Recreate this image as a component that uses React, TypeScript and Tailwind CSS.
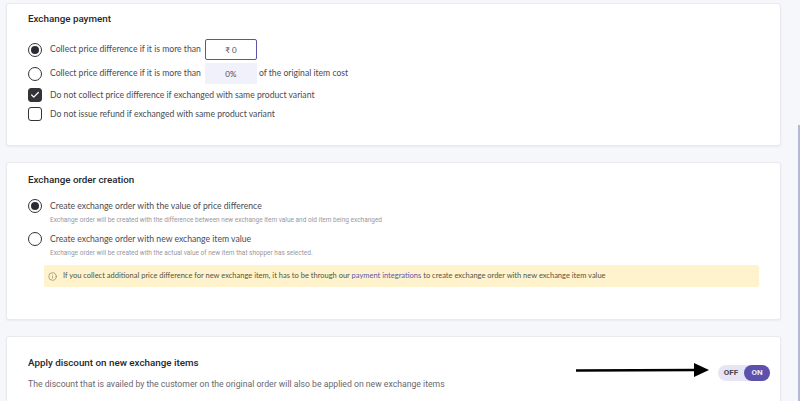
import { Check, Info } from "lucide-react";
import type { ReactNode } from "react";

function Radio({ checked = false }: { checked?: boolean }) {
	return (
		<span className="flex h-[14px] w-[14px] shrink-0 items-center justify-center rounded-full border-[1.5px] border-[#33333a] bg-white">
			{checked && <span className="h-[8px] w-[8px] rounded-full bg-[#2a2a30]" />}
		</span>
	);
}

function Box({ checked = false }: { checked?: boolean }) {
	return (
		<span
			className={`flex h-[14px] w-[14px] shrink-0 items-center justify-center rounded-[3px] border-[1.5px] border-[#33333a] ${
				checked ? "bg-[#33333a]" : "bg-white"
			}`}
		>
			{checked && <Check className="h-[10px] w-[10px] text-white" strokeWidth={3} />}
		</span>
	);
}

function Card({ className, children }: { className: string; children: ReactNode }) {
	return (
		<section className={`rounded-[3px] border border-[#e9e9ee] bg-white pl-[21px] shadow-[0_1px_2px_rgba(40,40,70,0.06)] ${className}`}>
			{children}
		</section>
	);
}

function Title({ children }: { children: ReactNode }) {
	return <h2 className="font-['Roboto',sans-serif] text-[9.8px] leading-[14px] font-medium text-[#26262b]">{children}</h2>;
}

export default function App() {
	return (
		<div className="relative h-[401px] w-[800px] overflow-hidden bg-[#f6f7fa] font-['Lato',sans-serif] text-[#4a4a50]">
			<div className="ml-[6px] flex w-[775px] flex-col gap-[16px] pt-[3px]">
				<Card className="h-[143px] pt-[8px]">
					<Title>Exchange payment</Title>
					<div className="mt-[13px] flex h-[21px] items-center text-[8.65px]">
						<Radio checked />
						<span className="ml-[8px]">Collect price difference if it is more than</span>
						<span className="ml-[4px] flex h-[21px] w-[52px] items-center justify-center rounded-[2px] border border-[#5b55a8] bg-white text-[8px]">
							₹ 0
						</span>
					</div>
					<div className="mt-[3px] flex h-[21px] items-center text-[8.65px]">
						<Radio />
						<span className="ml-[8px]">Collect price difference if it is more than</span>
						<span className="ml-[4px] flex h-[21px] w-[52px] items-center justify-center bg-[#f1f1fb] text-[8px]">0%</span>
						<span className="ml-[2px]">of the original item cost</span>
					</div>
					<div className="mt-[3px] flex h-[16px] items-center text-[8.65px]">
						<Box checked />
						<span className="ml-[8px]">Do not collect price difference if exchanged with same product variant</span>
					</div>
					<div className="mt-[3px] flex h-[16px] items-center text-[8.65px]">
						<Box />
						<span className="ml-[8px]">Do not issue refund if exchanged with same product variant</span>
					</div>
				</Card>

				<Card className="h-[158px] pt-[10px]">
					<Title>Exchange order creation</Title>
					<div className="mt-[12px] flex items-center text-[8.65px] leading-[14px]">
						<Radio checked />
						<span className="ml-[8px]">Create exchange order with the value of price difference</span>
					</div>
					<p className="mt-[1px] ml-[22px] font-['Roboto',sans-serif] text-[6.5px] leading-[12px] text-[#98989e]">
						Exchange order will be created with the difference between new exchange item value and old item being exchanged
					</p>
					<div className="mt-[6px] flex items-center text-[8.65px] leading-[14px]">
						<Radio />
						<span className="ml-[8px]">Create exchange order with new exchange item value</span>
					</div>
					<p className="mt-[1px] ml-[22px] font-['Roboto',sans-serif] text-[6.5px] leading-[12px] text-[#98989e]">
						Exchange order will be created with the actual value of new item that shopper has selected.
					</p>
					<div className="mt-[6px] ml-[16px] flex h-[22px] w-[715px] items-center rounded-[2px] bg-[#fff3cd] pl-[4px] text-[7.5px] text-[#55533f]">
						<Info className="h-[9px] w-[9px] text-[#6e6a50]" strokeWidth={1.5} />
						<span className="ml-[6px]">
							If you collect additional price difference for new exchange item, it has to be through our{" "}
							<span className="text-[#5b55b0]">payment integrations</span> to create exchange order with new exchange item value
						</span>
					</div>
				</Card>

				<Card className="flex h-[70px] justify-between pt-[19px] pr-[10px]">
					<div>
						<Title>Apply discount on new exchange items</Title>
						<p className="mt-[7px] font-['Roboto',sans-serif] text-[8.67px] leading-[14px] text-[#68686e]">
							The discount that is availed by the customer on the original order will also be applied on new exchange items
						</p>
					</div>
					<div className="mt-[9px] flex h-[16px] w-[52px] items-center rounded-full bg-[#e7e4f5] font-['Roboto',sans-serif] text-[8px] font-bold">
						<span className="w-[26px] text-center text-[#45454c]">OFF</span>
						<span className="flex h-[16px] w-[26px] items-center justify-center rounded-full bg-[#5c51ab] text-[#ececf8]">ON</span>
					</div>
				</Card>
			</div>

			{/* annotation arrow drawn over the screenshot */}
			<svg className="absolute top-[361px] left-[575px]" width="135" height="18" viewBox="0 0 135 18">
				<path d="M1 9.5 L121 9" stroke="#000" strokeWidth="2.5" />
				<path d="M119 2 L134 9 L119 16 Z" fill="#000" />
			</svg>

			<div className="absolute top-[125px] right-0 h-[276px] w-[2px] bg-[#b4b8d4]" />
		</div>
	);
}
